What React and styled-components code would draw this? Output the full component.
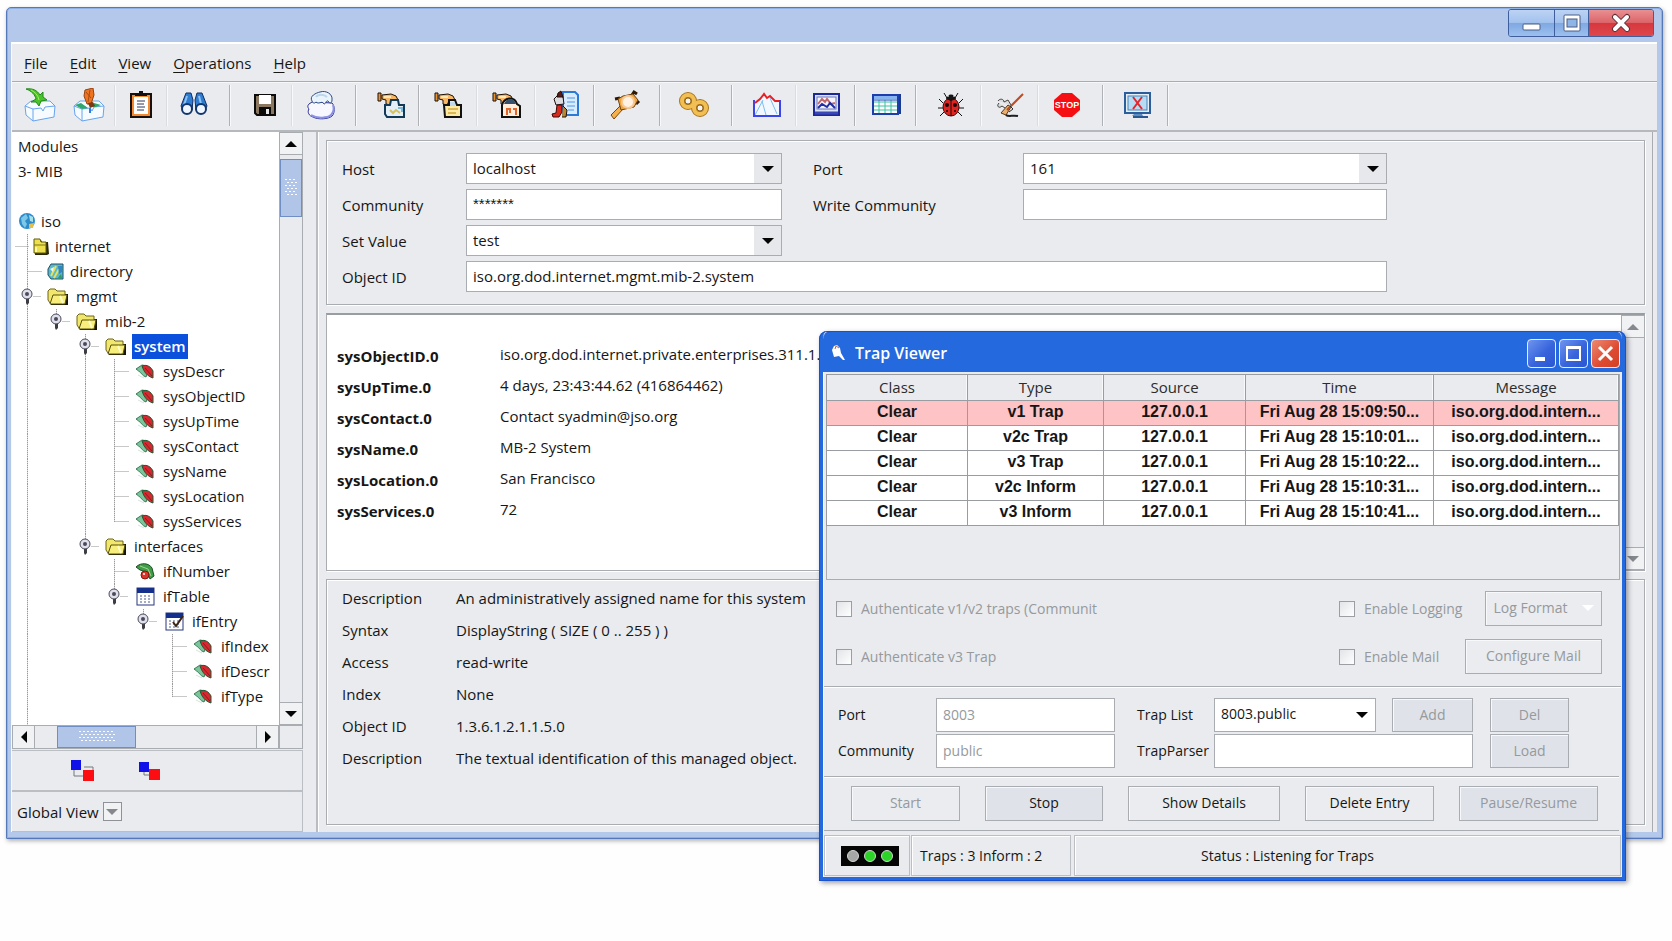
import React from 'react';
import styled, {createGlobalStyle, css} from 'styled-components';

const face = '#e9ebee';
const line = '#a9acb1';
const ink = '#161616';
const faded = '#96999d';
const skyBlue = '#b3c8ea';
const trapBlue = '#2469de';

const GlobalStyle = createGlobalStyle`
    * {
        box-sizing: border-box;
    }

    body {
        background: #fefefe;
        color: ${ink};
        font-family: "Open Sans", "Noto Sans", sans-serif;
        font-size: 15px;
        line-height: 20px;
        margin: 0;
    }

    button, input, select {
        color: inherit;
        font: inherit;
        margin: 0;
    }

    svg {
        display: block;
        flex: none;
    }
`;

/* Main window */

const Desktop = styled.main`
    min-height: 100vh;
    padding: 7px 9px 60px 6px;
    position: relative;
`;

const MainWindow = styled.section`
    background: ${skyBlue};
    border: 1px solid #5479b8;
    border-radius: 5px 5px 1px 1px;
    box-shadow: 1px 2px 4px rgba(60, 60, 70, 0.4), inset 0 0 0 1px #8fb0e2;
    padding: 0 5px 6px 4px;
`;

const TitleBar = styled.header`
    display: flex;
    height: 34px;
    justify-content: flex-end;
    padding: 1px 3px 0 0;
`;

const CaptionButtons = styled.div`
    border: 1px solid #3f5f9c;
    border-radius: 3px;
    display: flex;
    height: 28px;
    overflow: hidden;
`;

const CaptionButton = styled.button`
    align-items: center;
    background: ${({$danger}) => $danger
        ? 'linear-gradient(#e88f92 0, #dd6569 48%, #d6373d 50%, #df474c 100%)'
        : 'linear-gradient(#bcd3f3 0, #a3c2ee 48%, #7fa8e2 50%, #9cbfee 100%)'};
    border: 0;
    border-left: ${({$first}) => $first ? '0' : '1px solid #3f5f9c'};
    display: flex;
    justify-content: center;
    padding: 0;
    width: ${({$width}) => $width}px;
`;

const Client = styled.div`
    background: ${face};
    border-left: 1px solid #f8f9fa;
    border-top: 2px solid #fff;
`;

const MenuBar = styled.nav`
    border-bottom: 1px solid ${line};
    display: flex;
    gap: 22px;
    height: 38px;
    padding: 0 12px;
`;

const MenuButton = styled.button`
    background: none;
    border: 0;
    padding: 0;

    &::first-letter {
        text-decoration: underline;
        text-underline-offset: 3px;
    }
`;

const Toolbar = styled.div`
    border-bottom: 2px solid #b5b8bc;
    border-top: 1px solid #f6f7f8;
    display: flex;
    height: 50px;
`;

const ToolButton = styled.button`
    align-items: center;
    background: none;
    border: 0;
    display: flex;
    justify-content: center;
    padding: 0 0 3px;
    width: ${({$width}) => $width}px;
`;

const ToolDivider = styled.span`
    background: ${({$light}) => $light ? '#dadcdf' : '#aeb1b6'};
    border-right: 1px solid #f8f9fa;
    margin: 2px ${({$after}) => $after || 0}px 4px ${({$before}) => $before || 0}px;
    width: 2px;
`;

const Body = styled.div`
    display: flex;
`;

/* Module tree */

const Side = styled.aside`
    display: flex;
    flex: none;
    flex-direction: column;
    width: 291px;
`;

const TreeFrame = styled.div`
    border-right: 1px solid ${line};
    display: grid;
    flex: 1;
    grid-template-columns: minmax(0, 1fr) 23px;
    grid-template-rows: 1fr 24px;
`;

const Tree = styled.div`
    background: #fff;
    display: flex;
    flex-direction: column;
    min-height: 590px;
    padding: 1px 0 0 1px;
`;

const TreeRow = styled.div`
    align-items: center;
    display: flex;
    height: 25px;
`;

const TreeGap = styled.div`
    height: 26px;
`;

const TreeFill = styled.div`
    display: flex;
    flex: 1;
`;

const TreeHead = styled.span`
    padding-left: 5px;
`;

const dots = 'repeating-linear-gradient(#9a9a9a 0 1px, #dcdcdc 1px 2px)';
const dash = 'linear-gradient(#c8c8c8, #c8c8c8)';

const guides = {
    none: css`background: none;`,
    pipe: css`background: ${dots} 14px 0 / 1px 100% no-repeat;`,
    tee: css`background: ${dots} 14px 0 / 1px 100% no-repeat, ${dash} 14px 12px / 15px 1px no-repeat;`,
    cross: css`background: ${dots} 14px 0 / 1px 100% no-repeat, ${dash} 2px 12px / 15px 1px no-repeat;`,
    end: css`background: ${dots} 14px 0 / 1px 13px no-repeat, ${dash} 14px 12px / 15px 1px no-repeat;`,
    stub: css`background: ${dots} 14px 0 / 1px 8px no-repeat, ${dash} 20px 12px / 8px 1px no-repeat;`,
    knot: css`background: ${dots} 14px 0 / 1px 100% no-repeat, ${dash} 20px 12px / 8px 1px no-repeat;`
};

const Guide = styled.span`
    ${({$kind}) => guides[$kind]}
    align-self: stretch;
    align-items: center;
    display: flex;
    flex: none;
    justify-content: center;
    width: ${({$width}) => $width || 29}px;
`;

const NodeIcon = styled.span`
    display: flex;
    flex: none;
    justify-content: center;
    width: ${({$narrow}) => $narrow ? 24 : 32}px;
`;

const NodeLabel = styled.span`
    background: ${({$selected}) => $selected ? '#0b50dc' : 'none'};
    color: ${({$selected}) => $selected ? '#fff' : 'inherit'};
    font-weight: ${({$selected}) => $selected ? 600 : 400};
    line-height: 25px;
    padding: 0 2px;
`;

const ScrollBar = styled.div`
    background: ${face};
    border: 0 solid ${line};
    border-width: ${({$row}) => $row ? '1px 0' : '0 0 0 1px'};
    display: flex;
    flex-direction: ${({$row}) => $row ? 'row' : 'column'};
    justify-content: space-between;
`;

const ScrollButton = styled.button`
    align-items: center;
    background: #f1f2f4;
    border: 1px solid ${line};
    border-width: ${({$row}) => $row ? '0 1px' : '1px 0'};
    display: flex;
    flex: none;
    height: ${({$row}) => $row ? 'auto' : '23px'};
    justify-content: center;
    padding: 0;
    width: ${({$row}) => $row ? '23px' : 'auto'};
`;

const ScrollTrack = styled.div`
    display: flex;
    flex: 1;
    flex-direction: ${({$row}) => $row ? 'row' : 'column'};
    padding: ${({$row}) => $row ? '0 0 0 22px' : '4px 0 0'};
`;

const ScrollThumb = styled.span`
    align-items: center;
    background: #b0c5e8;
    border: 1px solid #6f8fc4;
    display: flex;
    height: ${({$row}) => $row ? '100%' : '58px'};
    justify-content: center;
    width: ${({$row}) => $row ? '79px' : '100%'};
`;

const Corner = styled.span`
    border: 1px solid ${line};
    border-right: 0;
`;

const SidePanel = styled.div`
    align-items: center;
    border: 1px solid #bbbec3;
    border-left: 0;
    display: flex;
    gap: ${({$gap}) => $gap}px;
    height: 41px;
    margin-top: ${({$top}) => $top || 0}px;
    padding-left: ${({$inset}) => $inset}px;
`;

const PlainButton = styled.button`
    background: none;
    border: 0;
    padding: 0;
`;

const TinyDrop = styled.button`
    align-items: center;
    background: #f1f2f4;
    border: 1px solid #8e9196;
    display: flex;
    height: 19px;
    justify-content: center;
    padding: 0;
    width: 19px;
`;

/* Agent pane */

const Pane = styled.div`
    border-left: 2px solid #b9bcc1;
    border-right: 1px solid ${line};
    box-shadow: inset 1px 0 0 #fff;
    display: flex;
    flex: 1;
    flex-direction: column;
    gap: 8px;
    margin: 0 4px 0 13px;
    min-width: 0;
    padding: 8px 7px 7px 8px;
`;

const Panel = styled.div`
    border: 1px solid ${line};
    box-shadow: inset 1px 1px 0 #fff, 1px 1px 0 #fff;
`;

const AgentForm = styled(Panel)`
    display: grid;
    gap: 5px 0;
    grid-template-columns: 124px minmax(0, 316fr) 241px minmax(0, 364fr);
    grid-auto-rows: 31px;
    padding: 12px 257px 12px 15px;
`;

const FieldLabel = styled.label`
    align-self: center;
    padding-left: ${({$inset}) => $inset || 0}px;
`;

const TextField = styled.input`
    background: #fff;
    border: 1px solid ${line};
    font-family: ${({$masked}) => $masked ? '"Liberation Sans", sans-serif' : 'inherit'};
    grid-column: span ${({$span}) => $span || 1};
    height: 100%;
    min-width: 0;
    outline: none;
    padding: 0 6px 2px;
    width: 100%;

    &:disabled {
        color: ${faded};
    }
`;

const SelectFrame = styled.div`
    background: #fff;
    border: 1px solid ${line};
    display: grid;
    grid-template-columns: minmax(0, 1fr) 27px;
    min-width: 0;
`;

const Select = styled.select`
    appearance: none;
    background: transparent;
    border: 0;
    grid-column: 1 / 3;
    grid-row: 1;
    outline: none;
    padding: 0 30px 2px 6px;
`;

const SelectArrow = styled.span`
    align-items: center;
    background: ${({$flat}) => $flat ? 'transparent' : '#e6e8ec'};
    display: flex;
    grid-column: 2;
    grid-row: 1;
    justify-content: center;
    pointer-events: none;
`;

const Results = styled(Panel)`
    background: #fff;
    border-top: 2px solid #999ca0;
    display: grid;
    grid-template-columns: minmax(0, 1fr) 23px;
    min-height: 258px;
`;

const ResultList = styled.dl`
    display: grid;
    grid-auto-rows: 31px;
    grid-template-columns: 163px minmax(0, 1fr);
    line-height: 31px;
    margin: 0;
    padding: 26px 0 0 10px;

    dt {
        font-weight: 700;
    }

    dd {
        line-height: 26px;
        margin: 0;
        white-space: nowrap;
    }
`;

const Details = styled(Panel)`
    flex: 1;
    min-height: 246px;
`;

const DetailList = styled.dl`
    display: grid;
    grid-auto-rows: 32px;
    grid-template-columns: 114px minmax(0, 1fr);
    line-height: 32px;
    margin: 0;
    padding: 2px 0 0 15px;

    dd {
        margin: 0;
        white-space: nowrap;
    }
`;

/* Trap viewer */

const TrapWindow = styled.section`
    background: ${face};
    border: 4px solid ${trapBlue};
    border-radius: 8px 8px 0 0;
    border-top: 0;
    box-shadow: 2px 2px 5px rgba(40, 40, 60, 0.45), inset 1px 0 0 #f7f8fa;
    font-size: 14px;
    outline: 1px solid #1c4fcb;
    outline-offset: -1px;
    position: absolute;
    right: 46px;
    top: 331px;
    width: 807px;
`;

const TrapTitle = styled.header`
    align-items: center;
    background: ${trapBlue};
    border-radius: 8px 8px 0 0;
    border-top: 1px solid #1c55d2;
    color: #fff;
    display: flex;
    gap: 3px;
    height: 41px;
    padding: 2px 2px 0 8px;
`;

const TrapName = styled.h1`
    flex: 1;
    font-size: 16px;
    font-weight: 600;
    margin: 0;
    padding-left: 5px;
`;

const TrapCaption = styled.button`
    align-items: center;
    background: ${({$danger}) => $danger
        ? 'linear-gradient(135deg, #ec8a72, #dd4a30 60%, #d24125)'
        : 'linear-gradient(135deg, #6f95ee, #3764dc 55%, #2a57d2)'};
    border: 1px solid #e6edfc;
    border-radius: 4px;
    display: flex;
    height: 29px;
    justify-content: center;
    padding: 0;
    width: 29px;
`;

const TrapTableArea = styled.div`
    border: 1px solid ${line};
    margin: 2px 2px 0 3px;
    min-height: 206px;
`;

const TrapTable = styled.table`
    border-collapse: collapse;
    margin: -1px 0 0 -1px;
    table-layout: fixed;
    width: 100%;

    th, td {
        border: 1px solid #999ca0;
        height: 25px;
        line-height: 22px;
        padding: 0 0 2px;
        text-align: center;
        white-space: nowrap;
    }

    th {
        box-shadow: inset -1px 0 0 #f8f9fa;
        color: #2c2c2c;
        font-size: 15px;
        font-weight: 400;
        height: 26px;
    }

    td {
        background: #fff;
        font-family: "Liberation Sans", Arial, sans-serif;
        font-size: 16px;
        font-weight: 700;
    }
`;

const TrapRow = styled.tr`
    td {
        background: ${({$alert}) => $alert ? '#fec3c4' : '#fff'};
    }
`;

const AuthOptions = styled.div`
    align-items: center;
    border-bottom: 1px solid ${line};
    box-shadow: 0 1px 0 #fff;
    color: ${faded};
    display: grid;
    gap: 13px 0;
    grid-auto-rows: 35px;
    grid-template-columns: minmax(0, 1fr) 126px 137px;
    margin: 0 1px;
    padding: 11px 19px 12px 12px;
`;

const CheckLabel = styled.label`
    align-items: center;
    display: flex;
    gap: 9px;
    white-space: nowrap;
`;

const CheckBox = styled.input`
    appearance: none;
    background: linear-gradient(135deg, #e2e4e7, #fff);
    border: 1px solid #9b9ea3;
    flex: none;
    height: 16px;
    width: 16px;
`;

const PushButton = styled.button`
    align-items: center;
    background: ${({$tinted}) => $tinted ? '#dfe3e9' : '#eaecef'};
    border: 1px solid ${line};
    box-shadow: inset 1px 1px 0 #f8f9fa;
    display: flex;
    gap: 14px;
    height: ${({$fill}) => $fill ? '100%' : '35px'};
    justify-content: center;
    justify-self: end;
    padding: 0 0 1px;
    width: ${({$width}) => $width}px;

    &:disabled {
        color: ${faded};
    }
`;

const ListenForm = styled.div`
    border-bottom: 1px solid ${line};
    box-shadow: 0 1px 0 #fff;
    display: grid;
    gap: 2px 0;
    grid-auto-rows: 34px;
    grid-template-columns: 98px 179px 99px 162px 97px 96px;
    margin: 0 3px 0 1px;
    padding: 11px 0 8px 14px;
`;

const Actions = styled.div`
    border-bottom: 1px solid ${line};
    display: flex;
    gap: 25px;
    margin: 0 3px 0 1px;
    padding: 9px 20px 9px 27px;
`;

const StatusBar = styled.footer`
    display: flex;
    height: 46px;
    padding: 4px 1px 1px;
`;

const StatusCell = styled.div`
    align-items: center;
    border: 1px solid #bbbec3;
    box-shadow: inset 1px 1px 0 #fff;
    display: flex;
    flex: ${({$width}) => $width ? `0 0 ${$width}px` : '1'};
    justify-content: ${({$width}) => $width ? 'flex-start' : 'center'};
    margin-left: ${({$gap}) => $gap || 0}px;
    padding: 0 ${({$tail}) => $tail || 0}px 0 ${({$inset}) => $inset || 0}px;
`;

const Lamps = styled.span`
    align-items: center;
    background: #050505;
    display: flex;
    gap: 5px;
    height: 20px;
    justify-content: center;
    width: 58px;
`;

const Lamp = styled.span`
    background: ${({$on}) => $on ? '#2bd427' : '#a6a6a6'};
    border: 1px solid #cfd8cf;
    border-radius: 50%;
    height: 12px;
    width: 12px;
`;

/* Drawings */

const ARROWS = {
    up: 'M0 6 L6 0 L12 6Z',
    down: 'M0 0 L12 0 L6 6Z',
    left: 'M6 0 L6 12 L0 6Z',
    right: 'M0 0 L6 6 L0 12Z'
};

const Arrow = ({dir = 'down', color = '#050505'}) => {
    const flat = dir === 'up' || dir === 'down';
    return (
        <svg width={flat ? 12 : 6} height={flat ? 6 : 12}>
            <path d={ARROWS[dir]} fill={color} />
        </svg>
    );
};

const Grip = ({wide}) => (
    <svg width={wide ? 36 : 12} height={wide ? 12 : 18} fill="#fff">
        {Array.from({length: wide ? 36 : 18}, (_, i) => {
            const cols = wide ? 9 : 3;
            const row = Math.floor(i / cols);
            return <rect key={i} x={(i % cols) * 4 + (row % 2) * 2} y={row * 3} width="2" height="1" />;
        })}
    </svg>
);

const Icon = ({size = 34, children}) => (
    <svg width={size} height={size} viewBox={`0 0 ${size} ${size}`} aria-hidden="true">{children}</svg>
);

const Crate = () => (
    <>
        <path d="M2 18 L8 13 L27 13 L32 18 L31 29 L10 33 L3 27Z" fill="#f6fbff" stroke="#68a4ee" />
        <path d="M2 18 L10 21 L18 20 L20 23 L22 19 L32 18 M10 21 V33" fill="none" stroke="#68a4ee" />
    </>
);

const LoadIcon = () => (
    <Icon>
        <Crate />
        <path d="M3 1 C9 0 14 2 17 7 L20 4 L20 9 L24 12 L18 13 L16 18 L13 14 L8 14 L13 11 C12 7 9 3 3 1Z" fill="#48c42a" stroke="#218a18" />
        <path d="M8 2 C12 4 15 7 16 12" fill="none" stroke="#a6ee60" />
    </Icon>
);

const UnloadIcon = () => (
    <Icon>
        <Crate />
        <path d="M3 17 L9 15 L16 20 L10 21Z M22 15 L29 17 L24 19 L18 19Z" fill="#2fa66a" />
        <path d="M13 2 L21 0 L22 7 L19 16 L15 16 L12 8Z" fill="#ee7420" stroke="#984010" />
        <path d="M14 4 L19 10 M18 2 L16 14" stroke="#a84a14" />
        <path d="M16 15 L21 14 L23 18 L18 20Z" fill="#7c3a14" />
        <path d="M18 20 v5" stroke="#2c7fe0" strokeWidth="2" />
    </Icon>
);

const ClipboardIcon = () => (
    <Icon>
        <rect x="7" y="6" width="20" height="23" fill="#f28a32" stroke="#1a1008" strokeWidth="2" />
        <rect x="10" y="9" width="14" height="17" fill="#fff" />
        <path d="M11 8 V5 H15 V3 H19 V5 H23 V8Z" fill="#101010" />
        <path d="M13 13 H21 M13 16 H20 M13 19 H21 M13 22 H20" stroke="#2b3458" />
    </Icon>
);

const BinocularsIcon = () => (
    <Icon>
        <path d="M9 5 L14 5 L16 12 L15 22 L5 20 L4 18Z" fill="#2f7cd0" stroke="#0d2d66" />
        <path d="M25 5 L20 5 L18 12 L19 22 L29 20 L30 18Z" fill="#2f7cd0" stroke="#0d2d66" />
        <path d="M10 8 L7 17 M22 8 L24 16" stroke="#8cc2f4" strokeWidth="2" />
        <circle cx="10" cy="21" r="5" fill="#eef7ff" stroke="#12356e" strokeWidth="2" />
        <circle cx="24" cy="21" r="5" fill="#eef7ff" stroke="#12356e" strokeWidth="2" />
    </Icon>
);

const SaveIcon = () => (
    <Icon>
        <path d="M7 7 H27 V27 H9 L7 25Z" fill="#8a7860" stroke="#0b0b0b" strokeWidth="2" />
        <rect x="11" y="7" width="12" height="9" fill="#fff" />
        <rect x="11" y="19" width="12" height="8" fill="#0b0b0b" />
        <rect x="18" y="21" width="3" height="5" fill="#e8e8e8" />
    </Icon>
);

const StackIcon = () => (
    <Icon>
        <path d="M5 16 C3 18 4 20 5 21 C3 24 5 28 9 29 C14 32 25 31 28 28 C31 25 31 18 28 15 L8 14Z" fill="#f6f7ff" stroke="#26298e" />
        <path d="M7 27 C13 31 24 30 27 27 C30 24 30 20 29 17" fill="none" stroke="#8a90e4" strokeWidth="2" />
        <path d="M8 13 C5 8 12 5 16 4 C22 2 29 6 28 12 C28 15 26 16 24 13 C22 12 22 16 20 16 C18 12 15 17 12 14 C10 16 9 15 8 13Z" fill="#eaf4fb" stroke="#2d4a86" />
        <path d="M12 9 C14 6 20 6 23 9" fill="none" stroke="#bcd6ec" strokeWidth="2" />
    </Icon>
);

const Tap = () => (
    <>
        <path d="M8 7 L17 6 L22 8 L24 12 L18 13 L16 17 L12 16 L12 12 L8 11Z" fill="#f8b765" stroke="#1c0f05" />
        <path d="M4 5 h3 v8 h-3z" fill="#e89234" stroke="#1c0f05" />
        <path d="M10 9 H17" stroke="#ffe7b4" strokeWidth="2" />
    </>
);

const GetIcon = () => (
    <Icon>
        <Tap />
        <path d="M11 17 L16 17 L17 12 L24 12 L25 17 L30 17 V29 H13 L11 26Z" fill="#e4eff8" stroke="#123a56" strokeWidth="2" />
        <path d="M16 22 L19 25 L22 22 L26 25" fill="none" stroke="#d8c25c" strokeWidth="2" />
        <path d="M24 20 h4 v4" fill="none" stroke="#7cb8d8" strokeWidth="2" />
    </Icon>
);

const GetNextIcon = () => (
    <Icon>
        <Tap />
        <path d="M13 17 H18 V12 H24 L26 17 H30 V29 H14Z" fill="#fbe9a4" stroke="#11120f" strokeWidth="2" />
        <path d="M19 14 H24 V18 H19Z" fill="#bfd8ee" />
        <path d="M17 21 H27 M17 25 H25" stroke="#b8860b" />
    </Icon>
);

const GetBulkIcon = () => (
    <Icon>
        <Tap />
        <path d="M13 17 C15 10 25 7 28 16 L31 18 V29 H13Z" fill="#ffeedd" stroke="#11120f" strokeWidth="2" />
        <path d="M15 16 C18 9 25 10 27 16Z" fill="#36506e" />
        <path d="M18 27 V21 H21 V25 M24 21 H27 V27" fill="none" stroke="#e2662a" strokeWidth="2" />
    </Icon>
);

const SetIcon = () => (
    <Icon>
        <path d="M15 4 H27 L30 7 V27 H15Z" fill="#d9ecff" stroke="#2c7ad8" strokeWidth="2" />
        <path d="M19 10 H27 M19 14 H27 M19 18 H27 M20 22 H26" stroke="#4a96e4" />
        <path d="M6 11 L10 7 L15 9 L16 16 L8 17Z" fill="#dcdce0" stroke="#1c1010" />
        <path d="M10 5 L13 3 L15 9 H9Z" fill="#5c1c10" stroke="#1c1010" />
        <path d="M9 17 H14 V24 L11 29 H5 L4 26 L8 25Z" fill="#d92a1c" stroke="#3c0808" />
        <path d="M15 18 L19 22 L18 29 H14" fill="#b8872e" stroke="#1c1010" />
    </Icon>
);

const FindIcon = () => (
    <Icon>
        <path d="M3 27 L12 18 L15 21 L6 31Z" fill="#f3b04c" stroke="#7c4610" />
        <path d="M7 11 L12 10 M24 7 L26 4 L29 6 M31 13 L28 16" stroke="#2c1a06" strokeWidth="3" fill="none" />
        <path d="M10 11 L15 8 L25 6 L30 12 L26 19 L13 22Z" fill="#f0a640" stroke="#70410c" />
        <circle cx="20" cy="14" r="6" fill="#fff2e2" stroke="#f8c994" strokeWidth="2" />
    </Icon>
);

const LinkIcon = () => (
    <Icon>
        <circle cx="11" cy="13" r="6" fill="#f2f2f2" stroke="#a8741a" strokeWidth="6" />
        <circle cx="23" cy="20" r="6" fill="#f2f2f2" stroke="#a8741a" strokeWidth="6" />
        <circle cx="11" cy="13" r="6" fill="none" stroke="#f2bf54" strokeWidth="4" />
        <circle cx="23" cy="20" r="6" fill="none" stroke="#f2bf54" strokeWidth="4" />
        <circle cx="11" cy="13" r="3" fill="#f4f4f4" stroke="#946616" />
        <circle cx="23" cy="20" r="3" fill="#f4f4f4" stroke="#946616" />
    </Icon>
);

const LineChartIcon = () => (
    <Icon>
        <path d="M4 12 V28 H30 V12 L26 15 L22 10 L15 8 L8 14Z" fill="#f1f8ff" />
        <path d="M5 27 L13 12 M12 13 L16 27 M20 10 L27 26" fill="none" stroke="#7cbcf0" />
        <path d="M4 12 V28 H30 V12" fill="none" stroke="#3a45ea" strokeWidth="2" />
        <path d="M5 15 L10 11 L14 6 L17 10 L20 8 L25 13 L29 13" fill="none" stroke="#ea1f26" strokeWidth="2" />
    </Icon>
);

const GraphIcon = () => (
    <Icon>
        <rect x="5" y="6" width="25" height="21" fill="#d9e2f4" stroke="#1c279c" strokeWidth="2" />
        <rect x="8" y="9" width="19" height="12" fill="#f4f4fc" stroke="#6a74b8" />
        <path d="M9 16 L13 11 L16 14 L18 11 L22 16 L26 15" fill="none" stroke="#c06a70" strokeWidth="2" />
        <path d="M9 20 L13 16 L18 19 L21 15 L26 20" fill="none" stroke="#1e2ea4" strokeWidth="2" />
        <path d="M6 25 H29" stroke="#3a46b4" strokeWidth="3" />
    </Icon>
);

const GridIcon = () => (
    <Icon>
        <rect x="6" y="6" width="26" height="20" fill="#1a3c8c" />
        <rect x="4" y="7" width="25" height="19" fill="#fff" stroke="#1d3fae" strokeWidth="2" />
        <rect x="5" y="8" width="23" height="3" fill="#86b4ee" />
        <path d="M5 14 H28 M5 18 H28 M5 22 H28 M10 12 V25 M16 12 V25 M22 12 V25" stroke="#3dc0a0" />
        <path d="M5 12 H28" stroke="#1d3fae" />
    </Icon>
);

const BugIcon = () => (
    <Icon>
        <path d="M10 5 L13 10 M24 5 L21 10 M5 11 L9 15 M29 11 L25 15 M4 20 H9 M30 20 H25 M6 28 L10 24 M28 28 L24 24" stroke="#111" />
        <ellipse cx="17" cy="19" rx="8" ry="9" fill="#e02420" stroke="#3a0808" />
        <path d="M12 11 C13 5 21 5 22 11 L17 13Z" fill="#151515" />
        <path d="M17 11 V28" stroke="#240404" />
        <circle cx="13" cy="17" r="2" fill="#1b0505" />
        <circle cx="21" cy="17" r="2" fill="#1b0505" />
        <circle cx="13" cy="23" r="1" fill="#1b0505" />
        <circle cx="21" cy="23" r="1" fill="#1b0505" />
        <path d="M13 8 h2 M19 8 h2" stroke="#fff" />
    </Icon>
);

const DecodeIcon = () => (
    <Icon>
        <path d="M5 13 C7 10 11 11 11 14 L15 12 L18 17 M6 15 C3 18 6 21 9 18 L12 20" fill="#dcdcdc" stroke="#444" />
        <path d="M8 25 L15 17 L18 19 L13 27 Z" fill="#e8b070" stroke="#593514" />
        <path d="M14 22 L30 6" stroke="#bf4a24" strokeWidth="2" />
        <path d="M17 18 L20 21 L16 24" fill="none" stroke="#2c2c2c" />
        <path d="M13 27 C15 29 20 27 25 28" fill="none" stroke="#1f1f1f" strokeWidth="2" />
    </Icon>
);

const StopText = styled.text`
    fill: #fff;
    font: 700 9px "Liberation Sans", Arial, sans-serif;
    text-anchor: middle;
`;

const StopIcon = () => (
    <Icon>
        <path d="M12 5 H22 L30 12 V22 L22 29 H12 L4 22 V12Z" fill="#f50f12" />
        <StopText x="17" y="20">STOP</StopText>
    </Icon>
);

const ScreenIcon = () => (
    <Icon>
        <rect x="5" y="5" width="25" height="20" fill="#e6eef6" stroke="#2b5f9c" strokeWidth="2" />
        <rect x="8" y="8" width="19" height="14" fill="#b6dcf4" stroke="#4b81b8" />
        <path d="M13 9 L22 21 M22 9 L13 21" stroke="#e3262c" strokeWidth="2" />
        <path d="M14 26 H22 L23 28 H12Z" fill="#5d8cc0" />
        <path d="M13 29 H28" stroke="#28588f" strokeWidth="2" />
    </Icon>
);

const Knob = () => (
    <svg width="13" height="17">
        <path d="M5 10 H8 V15 L6 17 L5 15Z" fill="#3c3c44" />
        <circle cx="6" cy="6" r="5" fill="#dfe0ea" stroke="#4a4a5c" />
        <circle cx="6" cy="6" r="2" fill="#4a4a5c" />
    </svg>
);

const GlobeIcon = () => (
    <svg width="17" height="17">
        <circle cx="8" cy="8" r="8" fill="#2e8ccc" />
        <path d="M2 5 L7 1 L9 5 L6 8 L8 11 L6 15 L3 11Z" fill="#7cc8e6" />
        <path d="M10 2 L14 4 L14 9 L11 8Z" fill="#a8e0e8" />
        <path d="M10 11 L15 10 L14 15 L10 15Z" fill="#e3bf52" />
    </svg>
);

const BinderIcon = () => (
    <svg width="17" height="18">
        <path d="M2 2 H8 L9 4 H15 L16 16 L14 17 H2Z" fill="#2c2a06" />
        <path d="M1 1 H7 L8 4 H13 V15 H1Z" fill="#eee04c" stroke="#5f5810" />
        <path d="M1 7 H13" stroke="#7c741c" />
        <path d="M3 9 V14" stroke="#fdf8a8" strokeWidth="2" />
    </svg>
);

const DirectoryIcon = () => (
    <svg width="18" height="18">
        <path d="M4 1 H16 V16 H4 L1 12 V6Z" fill="#5ab8c8" stroke="#1f4f6a" />
        <path d="M4 13 L9 3 M7 15 L12 6" stroke="#e6e05c" strokeWidth="2" />
        <path d="M11 3 H15 V9 L12 11Z" fill="#2f86c8" />
        <path d="M3 6 L7 4 L6 9Z" fill="#eaf8f4" />
        <path d="M10 16 L14 11 L15 15Z" fill="#2f9a5c" />
    </svg>
);

const FolderIcon = () => (
    <svg width="22" height="18">
        <path d="M3 6 H21 V17 H4Z" fill="#16150a" />
        <path d="M1 3 L3 1 H8 L10 3 H18 V15 H3 L1 12Z" fill="#f1e76c" stroke="#6c6414" />
        <path d="M6 7 H20 L18 16 H3Z" fill="#f7ee7c" stroke="#57500c" />
        <path d="M13 8 L16 15" stroke="#fffbc4" strokeWidth="2" />
    </svg>
);

const LeafIcon = () => (
    <svg width="19" height="15">
        <path d="M0 5 L6 1 L11 2 L12 8 L10 13 C6 12 4 7 0 5Z" fill="#7cc49a" stroke="#3c7c58" />
        <path d="M3 8 L7 12 M2 11 L8 14" stroke="#d5e4dc" />
        <path d="M6 2 C11 0 15 3 17 7 L17 14 C11 12 8 8 6 2Z" fill="#d9272f" stroke="#1d5a34" />
        <path d="M9 4 L16 12" stroke="#8c1820" />
    </svg>
);

const ScalarIcon = () => (
    <svg width="19" height="17">
        <path d="M0 4 C5 -1 13 0 16 5 L18 13 L14 16 L11 9 L4 7Z" fill="#3f9c48" stroke="#1c4f26" />
        <path d="M4 3 L12 6 L15 13" fill="none" stroke="#9ad88a" />
        <circle cx="9" cy="12" r="4" fill="#dc3528" stroke="#7c1812" />
        <circle cx="8" cy="11" r="1" fill="#fff" />
    </svg>
);

const TableIcon = ({marked}) => (
    <svg width="19" height="19">
        <rect x="1" y="1" width="17" height="17" fill="#fff" stroke="#27387e" />
        <rect x="1" y="1" width="17" height="5" fill="#14308c" />
        <path d="M4 9 h2 M8 9 h2 M12 9 h2 M4 12 h2 M8 12 h2 M12 12 h2 M4 15 h2 M8 15 h2 M12 15 h2" stroke="#4d5a8c" />
        {marked && <path d="M8 10 L11 14 L18 4" fill="none" stroke="#3c2410" strokeWidth="2" />}
    </svg>
);

const NodePairIcon = ({close}) => (
    <svg width="26" height="24">
        <path d={close ? 'M8 12 V16 H14' : 'M4 10 V17 H13 M14 8 H23 V14'} fill="none" stroke="#74787c" />
        <rect x={close ? 3 : 1} y={close ? 3 : 1} width="10" height="10" fill="#1010e8" />
        <rect x="13" y={close ? 10 : 11} width="11" height="11" fill="#fb0d12" />
    </svg>
);

const TrapIcon = () => (
    <svg width="16" height="18">
        <path d="M1 6 L3 2 L6 1 L9 4 L10 9 L14 16 L12 16 L8 12 L3 13Z" fill="#fff" />
        <path d="M4 5 L5 2 L8 4" fill="none" stroke="#b46a4c" />
    </svg>
);

/* Data */

const TOOLS = [
    {name: 'Load MIB', icon: LoadIcon, width: 56},
    {name: 'Unload MIB', icon: UnloadIcon, width: 41},
    {light: true, before: 5},
    {name: 'Description', icon: ClipboardIcon, width: 50},
    {light: true},
    {name: 'Find', icon: BinocularsIcon, width: 52},
    {before: 9, after: 8},
    {name: 'Save', icon: SaveIcon, width: 52},
    {light: true},
    {name: 'Clear', icon: StackIcon, width: 55},
    {before: 7, after: 6},
    {name: 'Get', icon: GetIcon, width: 55},
    {},
    {name: 'Get next', icon: GetNextIcon, width: 56},
    {light: true},
    {name: 'Get bulk', icon: GetBulkIcon, width: 56},
    {light: true},
    {name: 'Set', icon: SetIcon, width: 57},
    {},
    {name: 'Walk', icon: FindIcon, width: 60},
    {before: 4},
    {name: 'Link', icon: LinkIcon, width: 66},
    {before: 4, after: 6},
    {name: 'Line chart', icon: LineChartIcon, width: 56},
    {light: true},
    {name: 'Graph', icon: GraphIcon, width: 57},
    {},
    {name: 'Table view', icon: GridIcon, width: 59},
    {after: 5},
    {name: 'Debug', icon: BugIcon, width: 58},
    {light: true},
    {name: 'Decoder', icon: DecodeIcon, width: 55},
    {light: true},
    {name: 'Stop request', icon: StopIcon, width: 56},
    {before: 7, after: 2},
    {name: 'Close view', icon: ScreenIcon, width: 61},
    {}
];

const NODES = [
    {label: 'iso', icon: GlobeIcon, narrow: true, guides: [['none', 2]]},
    {label: 'internet', icon: BinderIcon, narrow: true, guides: [['cross', 16]]},
    {label: 'directory', icon: DirectoryIcon, narrow: true, guides: [['tee', 31]]},
    {label: 'mgmt', icon: FolderIcon, open: true, guides: [['knot']]},
    {label: 'mib-2', icon: FolderIcon, open: true, guides: [['pipe'], ['stub']]},
    {label: 'system', icon: FolderIcon, open: true, selected: true, guides: [['pipe'], ['none'], ['knot']]},
    ...['sysDescr', 'sysObjectID', 'sysUpTime', 'sysContact', 'sysName', 'sysLocation'].map(label => (
        {label, icon: LeafIcon, guides: [['pipe'], ['none'], ['pipe'], ['tee']]}
    )),
    {label: 'sysServices', icon: LeafIcon, guides: [['pipe'], ['none'], ['pipe'], ['end']]},
    {label: 'interfaces', icon: FolderIcon, open: true, guides: [['pipe'], ['none'], ['stub']]},
    {label: 'ifNumber', icon: ScalarIcon, guides: [['pipe'], ['none'], ['none'], ['tee']]},
    {label: 'ifTable', icon: TableIcon, open: true, guides: [['pipe'], ['none'], ['none'], ['stub']]},
    {
        label: 'ifEntry',
        icon: () => <TableIcon marked={true} />,
        open: true,
        guides: [['pipe'], ['none'], ['none'], ['none'], ['stub']]
    },
    ...['ifIndex', 'ifDescr', 'ifType'].map((label, i) => (
        {label, icon: LeafIcon, guides: [['pipe'], ['none'], ['none'], ['none'], ['none'], [i === 2 ? 'end' : 'tee']]}
    ))
];

const RESULTS = [
    ['sysObjectID.0', 'iso.org.dod.internet.private.enterprises.311.1.1.3'],
    ['sysUpTime.0', '4 days, 23:43:44.62 (416864462)'],
    ['sysContact.0', 'Contact syadmin@jso.org'],
    ['sysName.0', 'MB-2 System'],
    ['sysLocation.0', 'San Francisco'],
    ['sysServices.0', '72']
];

const DETAILS = [
    ['Description', 'An administratively assigned name for this system'],
    ['Syntax', 'DisplayString ( SIZE ( 0 .. 255 ) )'],
    ['Access', 'read-write'],
    ['Index', 'None'],
    ['Object ID', '1.3.6.1.2.1.1.5.0'],
    ['Description', 'The textual identification of this managed object.']
];

const TRAPS = [
    ['v1 Trap', '15:09:50'],
    ['v2c Trap', '15:10:01'],
    ['v3 Trap', '15:10:22'],
    ['v2c Inform', '15:10:31'],
    ['v3 Inform', '15:10:41']
];

const Dropdown = ({id, value, flat}) => (
    <SelectFrame>
        <Select id={id} defaultValue={value}>
            <option>{value}</option>
        </Select>
        <SelectArrow $flat={flat}><Arrow /></SelectArrow>
    </SelectFrame>
);

const ModuleTree = () => (
    <Tree>
        <TreeRow><TreeHead>Modules</TreeHead></TreeRow>
        <TreeRow><TreeHead>3- MIB</TreeHead></TreeRow>
        <TreeGap />
        {NODES.map(({label, icon: NodeDrawing, narrow, open, selected, guides: cells}) => (
            <TreeRow key={label}>
                {cells.map(([kind, width], i) => (
                    <Guide key={i} $kind={kind} $width={width}>
                        {open && i === cells.length - 1 && <Knob />}
                    </Guide>
                ))}
                <NodeIcon $narrow={narrow}><NodeDrawing /></NodeIcon>
                <NodeLabel $selected={selected}>{label}</NodeLabel>
            </TreeRow>
        ))}
        <TreeFill><Guide $kind="pipe" /></TreeFill>
    </Tree>
);

const Sidebar = () => (
    <Side>
        <TreeFrame>
            <ModuleTree />
            <ScrollBar>
                <ScrollButton aria-label="Scroll up"><Arrow dir="up" /></ScrollButton>
                <ScrollTrack><ScrollThumb><Grip /></ScrollThumb></ScrollTrack>
                <ScrollButton aria-label="Scroll down"><Arrow dir="down" /></ScrollButton>
            </ScrollBar>
            <ScrollBar $row={true}>
                <ScrollButton $row={true} aria-label="Scroll left"><Arrow dir="left" /></ScrollButton>
                <ScrollTrack $row={true}><ScrollThumb $row={true}><Grip wide={true} /></ScrollThumb></ScrollTrack>
                <ScrollButton $row={true} aria-label="Scroll right"><Arrow dir="right" /></ScrollButton>
            </ScrollBar>
            <Corner />
        </TreeFrame>
        <SidePanel $gap={40} $inset={58} $top={1}>
            <PlainButton aria-label="Expand tree"><NodePairIcon /></PlainButton>
            <PlainButton aria-label="Collapse tree"><NodePairIcon close={true} /></PlainButton>
        </SidePanel>
        <SidePanel $gap={4} $inset={5}>
            <span>Global View</span>
            <TinyDrop aria-label="Global view options"><Arrow color="#85888c" /></TinyDrop>
        </SidePanel>
    </Side>
);

const AgentPane = () => (
    <Pane>
        <AgentForm as="form">
            <FieldLabel htmlFor="host">Host</FieldLabel>
            <Dropdown id="host" value="localhost" />
            <FieldLabel htmlFor="port" $inset={31}>Port</FieldLabel>
            <Dropdown id="port" value="161" />
            <FieldLabel htmlFor="community">Community</FieldLabel>
            <TextField id="community" $masked={true} defaultValue="*******" />
            <FieldLabel htmlFor="write" $inset={31}>Write Community</FieldLabel>
            <TextField id="write" />
            <FieldLabel htmlFor="value">Set Value</FieldLabel>
            <Dropdown id="value" value="test" />
            <span />
            <span />
            <FieldLabel htmlFor="oid">Object ID</FieldLabel>
            <TextField id="oid" $span={3} defaultValue="iso.org.dod.internet.mgmt.mib-2.system" />
        </AgentForm>
        <Results>
            <ResultList>
                {RESULTS.map(([name, value]) => (
                    <React.Fragment key={name}>
                        <dt>{name}</dt>
                        <dd>{value}</dd>
                    </React.Fragment>
                ))}
            </ResultList>
            <ScrollBar>
                <ScrollButton aria-label="Results up"><Arrow dir="up" color="#85888c" /></ScrollButton>
                <ScrollButton aria-label="Results down"><Arrow dir="down" color="#85888c" /></ScrollButton>
            </ScrollBar>
        </Results>
        <Details>
            <DetailList>
                {DETAILS.map(([name, value], i) => (
                    <React.Fragment key={i}>
                        <dt>{name}</dt>
                        <dd>{value}</dd>
                    </React.Fragment>
                ))}
            </DetailList>
        </Details>
    </Pane>
);

const TrapViewer = () => (
    <TrapWindow>
        <TrapTitle>
            <TrapIcon />
            <TrapName>Trap Viewer</TrapName>
            <TrapCaption aria-label="Minimize trap viewer">
                <svg width="19" height="19"><rect x="3" y="13" width="10" height="4" fill="#fff" /></svg>
            </TrapCaption>
            <TrapCaption aria-label="Maximize trap viewer">
                <svg width="19" height="19"><path d="M3 3 H16 V16 H3Z M2 4 H17" fill="none" stroke="#fff" strokeWidth="2" /></svg>
            </TrapCaption>
            <TrapCaption $danger={true} aria-label="Close trap viewer">
                <svg width="19" height="19"><path d="M3 3 L16 16 M16 3 L3 16" stroke="#fff" strokeWidth="3" /></svg>
            </TrapCaption>
        </TrapTitle>
        <TrapTableArea>
            <TrapTable>
                <colgroup>
                    <col width="141" />
                    <col width="136" />
                    <col width="142" />
                    <col width="188" />
                    <col width="185" />
                </colgroup>
                <thead>
                    <tr>
                        <th>Class</th>
                        <th>Type</th>
                        <th>Source</th>
                        <th>Time</th>
                        <th>Message</th>
                    </tr>
                </thead>
                <tbody>
                    {TRAPS.map(([type, time], i) => (
                        <TrapRow key={type} $alert={i === 0}>
                            <td>Clear</td>
                            <td>{type}</td>
                            <td>127.0.0.1</td>
                            <td>{`Fri Aug 28 ${time}...`}</td>
                            <td>iso.org.dod.intern...</td>
                        </TrapRow>
                    ))}
                </tbody>
            </TrapTable>
        </TrapTableArea>
        <AuthOptions>
            <CheckLabel><CheckBox type="checkbox" disabled />Authenticate v1/v2 traps (Communit</CheckLabel>
            <CheckLabel><CheckBox type="checkbox" disabled />Enable Logging</CheckLabel>
            <PushButton $width={117} disabled>Log Format<Arrow color="#fff" /></PushButton>
            <CheckLabel><CheckBox type="checkbox" disabled />Authenticate v3 Trap</CheckLabel>
            <CheckLabel><CheckBox type="checkbox" disabled />Enable Mail</CheckLabel>
            <PushButton $width={137} disabled>Configure Mail</PushButton>
        </AuthOptions>
        <ListenForm>
            <FieldLabel htmlFor="trap-port">Port</FieldLabel>
            <TextField id="trap-port" defaultValue="8003" disabled />
            <FieldLabel htmlFor="trap-list" $inset={22}>Trap List</FieldLabel>
            <Dropdown id="trap-list" value="8003.public" flat={true} />
            <PushButton $width={81} $tinted={true} $fill={true} disabled>Add</PushButton>
            <PushButton $width={79} $tinted={true} $fill={true} disabled>Del</PushButton>
            <FieldLabel htmlFor="trap-community">Community</FieldLabel>
            <TextField id="trap-community" defaultValue="public" disabled />
            <FieldLabel htmlFor="trap-parser" $inset={22}>TrapParser</FieldLabel>
            <TextField id="trap-parser" $span={2} />
            <PushButton $width={79} $tinted={true} $fill={true} disabled>Load</PushButton>
        </ListenForm>
        <Actions>
            <PushButton $width={109} disabled>Start</PushButton>
            <PushButton $width={118} $tinted={true}>Stop</PushButton>
            <PushButton $width={152}>Show Details</PushButton>
            <PushButton $width={129}>Delete Entry</PushButton>
            <PushButton $width={139} $tinted={true} disabled>Pause/Resume</PushButton>
        </Actions>
        <StatusBar>
            <StatusCell $width={86} $inset={16}>
                <Lamps><Lamp /><Lamp $on={true} /><Lamp $on={true} /></Lamps>
            </StatusCell>
            <StatusCell $width={160} $gap={1} $inset={8}>Traps : 3 Inform : 2</StatusCell>
            <StatusCell $gap={3} $tail={120}>Status : Listening for Traps</StatusCell>
        </StatusBar>
    </TrapWindow>
);

const App = () => (
    <Desktop>
        <GlobalStyle />
        <MainWindow>
            <TitleBar>
                <CaptionButtons>
                    <CaptionButton $width={45} $first={true} aria-label="Minimize">
                        <svg width="19" height="15"><rect x="1" y="8" width="17" height="6" rx="1" fill="#fff" stroke="#4b5f86" /></svg>
                    </CaptionButton>
                    <CaptionButton $width={34} aria-label="Maximize">
                        <svg width="18" height="18">
                            <rect x="1" y="1" width="16" height="16" rx="1" fill="#fff" stroke="#4b5f86" />
                            <rect x="4" y="5" width="10" height="8" fill="#8fb4e6" stroke="#4b5f86" />
                        </svg>
                    </CaptionButton>
                    <CaptionButton $width={65} $danger={true} aria-label="Close">
                        <svg width="20" height="20">
                            <path d="M4 4 L16 16 M16 4 L4 16" stroke="#5c3038" strokeWidth="6" strokeLinecap="round" />
                            <path d="M4 4 L16 16 M16 4 L4 16" stroke="#fff" strokeWidth="4" strokeLinecap="round" />
                        </svg>
                    </CaptionButton>
                </CaptionButtons>
            </TitleBar>
            <Client>
                <MenuBar>
                    {['File', 'Edit', 'View', 'Operations', 'Help'].map(item => (
                        <MenuButton key={item}>{item}</MenuButton>
                    ))}
                </MenuBar>
                <Toolbar>
                    {TOOLS.map(({name, icon: ToolDrawing, width, light, before, after}, i) => name ? (
                        <ToolButton key={name} $width={width} aria-label={name}><ToolDrawing /></ToolButton>
                    ) : (
                        <ToolDivider key={i} $light={light} $before={before} $after={after} />
                    ))}
                </Toolbar>
                <Body>
                    <Sidebar />
                    <AgentPane />
                </Body>
            </Client>
        </MainWindow>
        <TrapViewer />
    </Desktop>
);

export default App;
